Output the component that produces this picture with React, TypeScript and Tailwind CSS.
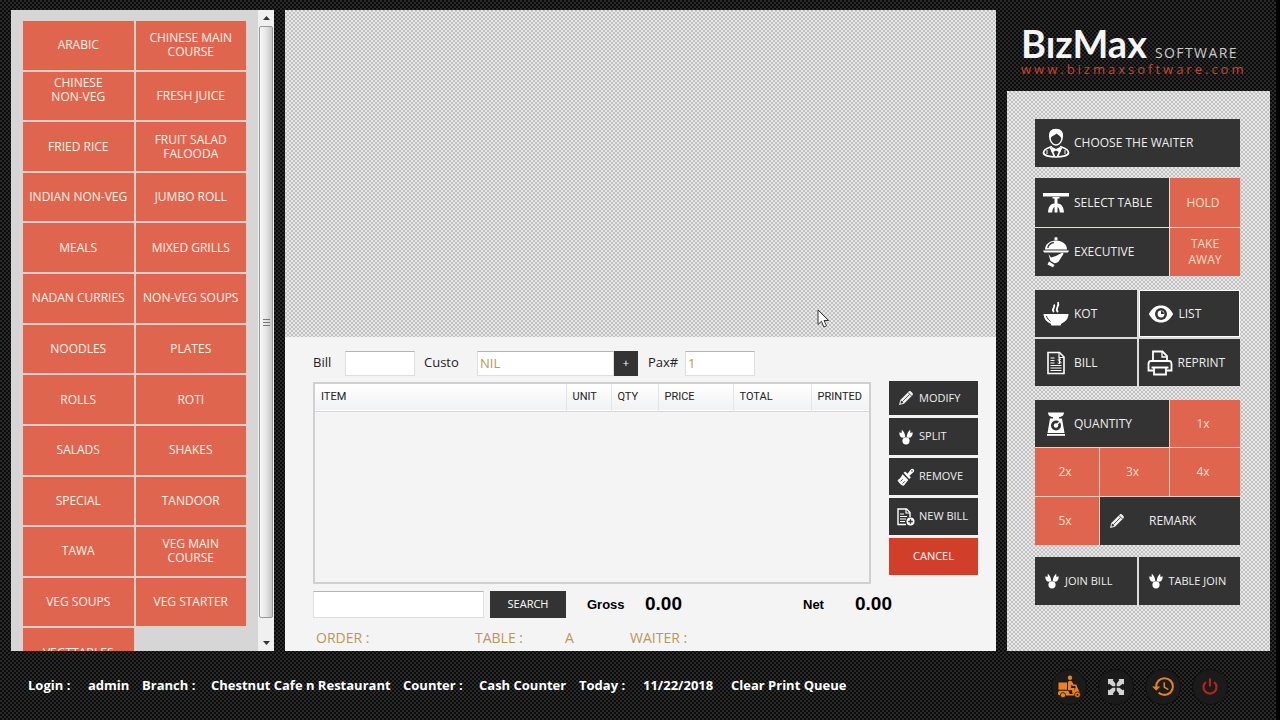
import type { ReactNode } from 'react';
import { MdHistory } from 'react-icons/md';

const darkWeave =
  'bg-[#181818] bg-[repeating-conic-gradient(#0b0b0b_0_25%,#292929_0_50%)] bg-[length:4px_4px]';
const lightWeave =
  'bg-[#d5d5d5] bg-[repeating-conic-gradient(#c2c2c2_0_25%,#e8e8e8_0_50%)] bg-[length:4px_4px]';

const categories: { label: string; raised?: boolean }[] = [
  { label: 'ARABIC' },
  { label: 'CHINESE MAIN COURSE' },
  { label: 'CHINESE NON-VEG', raised: true },
  { label: 'FRESH JUICE' },
  { label: 'FRIED RICE' },
  { label: 'FRUIT SALAD FALOODA' },
  { label: 'INDIAN NON-VEG' },
  { label: 'JUMBO ROLL' },
  { label: 'MEALS' },
  { label: 'MIXED GRILLS' },
  { label: 'NADAN CURRIES' },
  { label: 'NON-VEG SOUPS' },
  { label: 'NOODLES' },
  { label: 'PLATES' },
  { label: 'ROLLS' },
  { label: 'ROTI' },
  { label: 'SALADS' },
  { label: 'SHAKES' },
  { label: 'SPECIAL' },
  { label: 'TANDOOR' },
  { label: 'TAWA' },
  { label: 'VEG MAIN COURSE' },
  { label: 'VEG SOUPS' },
  { label: 'VEG STARTER' },
  { label: 'VEGTTABLES' },
];

function WaiterIcon() {
  return (
    <svg width="28" height="30" viewBox="0 0 28 30" fill="none" aria-hidden="true">
      <path d="M14 1.500c4.300 0 6.500 2.800 6.300 6.500C20 13 17.600 17 14 17S8 13 7.700 8C7.500 4.300 9.700 1.500 14 1.500Z" stroke="#fff" strokeWidth="1.600" />
      <path d="M7.500 9C7 4 9.500 1 14 1s7 3 6.500 8l-1.200 1.500C18.500 7.500 16 7 14.500 5.500 12.500 7.500 9.500 7.500 8.700 10.500Z" fill="#fff" />
      <path d="M10 18.500c-4 1.500-8 2-8.500 6-.3 3 6 4.500 12.500 4.500s12.800-1.500 12.500-4.500C26 20.500 22 20 18 18.500" stroke="#fff" strokeWidth="1.700" />
      <path d="m8.500 19.500 4 9M19.500 19.500l-4 9" stroke="#fff" strokeWidth="1.800" />
      <path d="m10 19.500 4 2 4-2v4.500l-4-2-4 2ZM5 22v4M23 22v4" fill="#fff" stroke="#fff" />
    </svg>
  );
}

function TableIcon() {
  return (
    <svg width="28" height="24" viewBox="0 0 28 24" fill="none" aria-hidden="true">
      <path d="M1 2h26v3.500H1Z" fill="#fff" />
      <path d="M10.500 6h7v1.500h-2V13h-3V7.500h-2Z" fill="#fff" />
      <path d="M12.500 12.500C8 13 6.500 16 6 21.500h4.200c.3-3 .8-4.500 2.300-5.500v5.500h3V16c1.500 1 2 2.500 2.300 5.500H22c-.5-5.500-2-8.500-6.500-9Z" fill="#fff" />
    </svg>
  );
}

function ClocheIcon() {
  return (
    <svg width="28" height="32" viewBox="0 0 28 32" fill="#fff" aria-hidden="true">
      <circle cx="14" cy="2.800" r="1.700" />
      <path d="M3 13.500C3 8 8 4.500 14 4.500S25 8 25 13.500Z" />
      <path d="M5.800 12c.5-3.300 3-5 6-5.500" fill="none" stroke="#333" strokeWidth="1.300" />
      <path d="M1 14.500h26l-1 2H2Z" />
      <path d="M6.500 18 9 21.500l5-1.500 5.500-3c1.500-.7 2.300.3 1.600 1.500L17 25c-1 1.500-2.500 2-4.500 2.300L8.500 25Z" />
      <path d="M7 25.500 12.500 29l-1.500 2.300-5.500-2.800Z" />
    </svg>
  );
}

function BowlIcon() {
  return (
    <svg width="28" height="28" viewBox="0 0 28 28" fill="#fff" aria-hidden="true">
      <path d="M1.500 14h25c-.3 5-3 7.500-7 9.500l-1 2h-9l-1-2c-4-2-6.700-4.500-7-9.500Z" />
      <path d="M4.500 16c.8 2.500 2 4 4 5.500" fill="none" stroke="#333" />
      <path d="M12 12c-3.500-3 2-4 0-7.500M16 12c-4-3.500 2-5 0-10" fill="none" stroke="#fff" strokeWidth="1.800" />
    </svg>
  );
}

function EyeIcon() {
  return (
    <svg width="26" height="22" viewBox="0 0 26 22" aria-hidden="true">
      <path d="M.8 11C4 5 8 2.500 13 2.500S22 5 25.200 11C22 17 18 19.500 13 19.500S4 17 .8 11Z" fill="#fff" />
      <circle cx="13" cy="11" r="6" fill="#333" />
      <circle cx="13" cy="11" r="3.400" fill="#fff" />
      <path d="M13 11V8a3 3 0 0 1 3 3Z" fill="#333" />
    </svg>
  );
}

function BillIcon() {
  return (
    <svg width="20" height="24" viewBox="0 0 20 24" fill="none" stroke="#fff" aria-hidden="true">
      <path d="M2 1.500h11.500L18 6v16.500H2Z" strokeWidth="1.600" />
      <path d="M13 1.500v5h5" strokeWidth="1.200" />
      <path d="M4.500 7h4M4.500 9.500h4M4.500 12h4M4.500 14.500h11M4.500 17h11M4.500 19.500h11" strokeWidth="1.200" />
      <path d="M15 8.500c-1.500-1-3.500-.5-3 .8.500 1 3 .7 3 2 0 1.200-2 1.500-3.300.7M13.500 7.500V13" strokeWidth="1" />
    </svg>
  );
}

function PrinterIcon() {
  return (
    <svg width="26" height="26" viewBox="0 0 26 26" fill="none" stroke="#fff" strokeWidth="1.800" aria-hidden="true">
      <path d="M6 11V1.500h9.500L20 6v5" />
      <path d="M15 2v5h5" strokeWidth="1.300" />
      <path d="M6 20.500H1.500V14c0-1.700.8-3 2.500-3h18c1.700 0 2.500 1.300 2.500 3v6.500H20" />
      <path d="M7 17.500h12v7H7ZM4.500 17.500h17" />
    </svg>
  );
}

function ScaleIcon() {
  return (
    <svg width="20" height="24" viewBox="0 0 20 24" aria-hidden="true">
      <path d="M2 .5h16c0 3-2.500 4.500-5 4.500v1.500h3l2.500 14.500H1.500L4 6.500h3V5C4.500 5 2 3.500 2 .5Z" fill="#fff" />
      <path d="M1 22h18v1.800H1Z" fill="#fff" />
      <circle cx="10" cy="13.500" r="5" fill="#333" />
      <circle cx="10" cy="13.500" r="2.200" fill="#fff" />
      <path d="m9.500 14 4-4" stroke="#fff" strokeWidth="1.300" />
    </svg>
  );
}

function PencilIcon() {
  return (
    <svg width="16" height="16" viewBox="0 0 16 16" aria-hidden="true">
      <path d="m1 15 1.300-5L11 1.300c1.200-1.200 4.900 2.400 3.700 3.700L6 13.700Z" fill="#eee" />
      <path d="m4.500 11.500 7-7M10 2.500 13.500 6" fill="none" stroke="#333" strokeWidth=".8" />
      <path d="M3 10.800c1 .1 2 1.100 2.200 2.200l-2.700.6Z" fill="#333" />
    </svg>
  );
}

function JoinIcon() {
  return (
    <svg width="14" height="16" viewBox="0 0 14 16" fill="#fff" aria-hidden="true">
      <path d="M2.800.8C4.500 2 6 4.800 6.300 7.600L5 8.800 2.500 8.500C.8 7.500 0 5 .5 3.200L2.600 4Z" />
      <path d="M11.200.8C9.500 2 8 4.800 7.700 7.600L9 8.800l2.500-.3C13.200 7.500 14 5 13.500 3.200L11.400 4Z" />
      <circle cx="7" cy="11.800" r="3.600" />
    </svg>
  );
}

function BrushIcon() {
  return (
    <svg width="18" height="18" viewBox="0 0 16 16" fill="#fff" aria-hidden="true">
      <path d="m9.300 5 3-3.700c1.500-1.600 4 .7 2.500 2.300L11 6.800l1.300 1.700-1.500 1.300-5-5.500L7.300 3Z" />
      <path d="m5 5.500 5 5.200-4 5c-2-.2-4.500-2-5.500-5 1.800-1 3-2.500 4.500-5.200Z" />
      <path d="m3 12 2-2M5 13.800l2-2" stroke="#333" strokeWidth=".8" />
      <circle cx="13.300" cy="2.700" r=".7" fill="#333" />
    </svg>
  );
}

function NewBillIcon() {
  return (
    <svg width="18" height="18" viewBox="0 0 18 18" fill="none" stroke="#fff" aria-hidden="true">
      <path d="M9 16.500H1V1h8.500L13 4.500V9" strokeWidth="1.400" />
      <path d="M9 1v4h4M3 6h4M3 8.500h7M3 11h6M3 13.500h5" strokeWidth="1.100" />
      <circle cx="13.500" cy="13.500" r="4" fill="#fff" stroke="none" />
      <path d="M13.500 11.200v4.600M11.200 13.500h4.600" stroke="#333" strokeWidth="1.400" />
    </svg>
  );
}

function ScooterIcon() {
  return (
    <svg width="24" height="24" viewBox="0 0 24 24" fill="#f0821e" aria-hidden="true">
      <circle cx="13" cy="2.800" r="2.200" />
      <path d="M1.500 7.500H10v7.200H1.500Z" />
      <path d="M11 7c1-1.700 3.500-1.700 4.300 0l1.200 2.500h2.800V11h-3.800l-1-1.500-.6 3.500h3.600v5.500h-2.300v-3.300H11Z" />
      <path d="M1 18c0-1.700 1-2.300 3-2.300h7.500L12.700 19H16l2.700-7-1-1.500 1.500-.8 3.300 7.300-4.500 3.500H3L1 19.500Z" />
      <circle cx="6" cy="20.200" r="2.600" stroke="#191919" strokeWidth=".8" />
      <circle cx="20.500" cy="19.700" r="2.900" stroke="#191919" strokeWidth=".8" />
      <circle cx="20.500" cy="19.700" r="1" fill="#191919" />
    </svg>
  );
}

function ExpandIcon() {
  return (
    <svg width="16" height="16" viewBox="0 0 16 16" fill="#d4d4d4" aria-hidden="true">
      <path d="M0 0h5.500l-.7 1.300L7.300 4.500v2.800H4.500L1.300 4.800 0 5.500Z" />
      <path d="M16 0h-5.500l.7 1.300L8.700 4.500v2.800h2.800l3.200-2.500 1.300.7Z" />
      <path d="M0 16h5.500l-.7-1.300 2.500-3.200V8.700H4.500l-3.200 2.500-1.300-.7Z" />
      <path d="M16 16h-5.500l.7-1.300-2.500-3.200V8.700h2.800l3.200 2.500 1.300-.7Z" />
    </svg>
  );
}

function PowerIcon() {
  return (
    <svg width="18" height="20" viewBox="0 0 18 20" fill="none" stroke="#b3241c" strokeWidth="2.200" aria-hidden="true">
      <path d="M5 5a6.500 6.500 0 1 0 8 0M9 1.500v8" />
    </svg>
  );
}

function DarkButton({ icon, children, className = '' }: { icon: ReactNode; children: ReactNode; className?: string }) {
  return (
    <button type="button" className={`flex items-center bg-[#333] pl-[7px] text-[12px] leading-4 text-[#eee] ${className}`}>
      <span className="flex w-7 shrink-0 justify-center">{icon}</span>
      <span className="ml-1 whitespace-nowrap">{children}</span>
    </button>
  );
}

function RedButton({ children, className = '' }: { children: ReactNode; className?: string }) {
  return (
    <button type="button" className={`bg-[#e0654f] pr-1 text-[12px] leading-4 text-[#f8dfc6] ${className}`}>
      {children}
    </button>
  );
}

function SideButton({ icon, children, className = 'h-[37px]' }: { icon: ReactNode; children: ReactNode; className?: string }) {
  return (
    <button type="button" className={`flex items-center bg-[#333] pl-2 text-[11px] text-[#eee] ${className}`}>
      <span className="flex w-[18px] shrink-0 justify-center">{icon}</span>
      <span className="ml-1 whitespace-nowrap">{children}</span>
    </button>
  );
}

function CategoryPanel() {
  return (
    <aside className="flex w-[263px] shrink-0 overflow-hidden bg-[#d6d6d6]">
      <div className="min-h-0 flex-1 overflow-hidden pt-[11px] pr-3 pl-3">
        <div className="grid h-[656px] auto-rows-fr grid-cols-2 gap-[2px]">
          {categories.map((c) => (
            <button
              key={c.label}
              type="button"
              className={`flex items-center justify-center bg-[#e0654f] text-center text-[12px] leading-[14px] text-[#fff3e8] outline-1 outline-[#e2d0c8] ${c.raised ? 'px-6 pb-3' : 'px-1'}`}
            >
              {c.label}
            </button>
          ))}
        </div>
      </div>
      <div className="flex w-4 shrink-0 flex-col items-center bg-[#f0f0f0]">
        <button type="button" aria-label="Scroll up" className="flex h-4 w-full shrink-0 items-center justify-center">
          <svg width="7" height="4" viewBox="0 0 7 4" fill="#333" aria-hidden="true"><path d="M0 4 3.500 0 7 4Z" /></svg>
        </button>
        <div className="flex w-[14px] flex-1 flex-col items-center justify-center gap-[2px] rounded-xs border border-[#979797] bg-linear-to-r from-[#f7f7f7] via-[#e6e6e6] to-[#c4c4c4]">
          <span className="h-px w-[7px] bg-[#777]" />
          <span className="h-px w-[7px] bg-[#777]" />
          <span className="h-px w-[7px] bg-[#777]" />
        </div>
        <button type="button" aria-label="Scroll down" className="flex h-[33px] w-full shrink-0 items-end justify-center pb-[6px]">
          <svg width="7" height="4" viewBox="0 0 7 4" fill="#333" aria-hidden="true"><path d="M0 0h7L3.500 4Z" /></svg>
        </button>
      </div>
    </aside>
  );
}

const field = 'border border-[#dedede] border-t-[#b5b5b5] bg-white';
const headCell = 'border-r border-[#e3e4e6] pl-[6px] font-normal last:border-r-0';

function OrderPanel() {
  return (
    <section className="flex min-w-0 flex-1 flex-col">
      <div className={`min-h-0 flex-1 ${lightWeave}`} />
      <div className="flex h-[314px] shrink-0 flex-col bg-[#f4f4f4] pr-[18px] pl-7">
        <div className="flex h-[44px] shrink-0 items-center pt-2 text-[13px] text-[#222]">
          <label htmlFor="bill" className="w-8">Bill</label>
          <input id="bill" className={`h-[25px] w-[70px] ${field}`} />
          <label htmlFor="customer" className="ml-[9px] w-[53px]">Custo</label>
          <input id="customer" defaultValue="NIL" className={`h-[25px] w-[137px] px-[2px] text-[#b8975a] ${field}`} />
          <button type="button" aria-label="Add customer" className="h-[25px] w-6 bg-[#333] text-[11px] text-white">+</button>
          <label htmlFor="pax" className="ml-[10px] w-[37px]">Pax#</label>
          <input id="pax" defaultValue="1" className={`h-[25px] w-[70px] px-[2px] text-[#b8975a] ${field}`} />
        </div>
        <div className="flex shrink-0">
          <div className="mt-px mr-[18px] h-[202px] min-w-0 flex-1 border-2 border-[#d0d0d0] bg-[#f4f4f4]">
            <table className="w-full table-fixed border-collapse text-left font-[Roboto,sans-serif] text-[11px] text-[#222]">
              <colgroup>
                <col />
                <col className="w-[45px]" />
                <col className="w-[47px]" />
                <col className="w-[75px]" />
                <col className="w-[78px]" />
                <col className="w-[58px]" />
              </colgroup>
              <thead>
                <tr className="h-[27px] border-b border-[#d5d5d5] bg-linear-to-b from-white to-[#f1f2f4]">
                  <th className={headCell}>ITEM</th>
                  <th className={headCell}>UNIT</th>
                  <th className={headCell}>QTY</th>
                  <th className={headCell}>PRICE</th>
                  <th className={headCell}>TOTAL</th>
                  <th className={headCell}>PRINTED</th>
                </tr>
              </thead>
              <tbody />
            </table>
          </div>
          <div className="flex w-[89px] shrink-0 flex-col gap-[3px]">
            <SideButton icon={<PencilIcon />} className="h-[34px]">MODIFY</SideButton>
            <SideButton icon={<JoinIcon />}>SPLIT</SideButton>
            <SideButton icon={<BrushIcon />}>REMOVE</SideButton>
            <SideButton icon={<NewBillIcon />}>NEW BILL</SideButton>
            <button type="button" className="h-[37px] bg-[#d13f2a] text-[11px] text-white">CANCEL</button>
          </div>
        </div>
        <div className="mt-[7px] flex h-[27px] shrink-0 items-center">
          <input aria-label="Search items" className={`h-[27px] w-[171px] ${field}`} />
          <button type="button" className="ml-[6px] h-[27px] w-[76px] bg-[#333] text-[11px] text-white">SEARCH</button>
          <div className="ml-[21px] flex w-[216px] items-center font-['Liberation_Sans',sans-serif] font-bold text-black">
            <span className="w-[58px] text-[13px]">Gross</span>
            <span className="text-[19px]">0.00</span>
          </div>
          <div className="flex items-center font-['Liberation_Sans',sans-serif] font-bold text-black">
            <span className="w-[52px] text-[13px]">Net</span>
            <span className="text-[19px]">0.00</span>
          </div>
        </div>
        <div className="mt-[10px] flex pl-[3px] text-[14px] leading-5 text-[#b8975a]">
          <span className="w-[159px]">ORDER :</span>
          <span className="w-[90px]">TABLE :</span>
          <span className="w-[65px]">A</span>
          <span>WAITER :</span>
        </div>
      </div>
    </section>
  );
}

function ControlPanel() {
  return (
    <aside className="flex w-[263px] shrink-0 flex-col">
      <header className="flex h-[81px] shrink-0 flex-col pt-4 pl-[14px] whitespace-nowrap">
        <div className="flex h-9 items-baseline leading-[34px] text-[#f4f4f4]">
          <span className="w-[134px] font-[Lato,sans-serif] text-[38px] font-bold">BızMax</span>
          <span className="text-[14px] tracking-widest text-[#ccc]">SOFTWARE</span>
        </div>
        <a href="#site" className="text-[13px] leading-[14px] tracking-[3px] text-[#d2402c]">www.bizmaxsoftware.com</a>
      </header>
      <div className={`flex min-h-0 flex-1 flex-col pt-7 pr-[30px] pl-7 ${lightWeave}`}>
        <DarkButton icon={<WaiterIcon />} className="h-12 shrink-0">CHOOSE THE WAITER</DarkButton>
        <div className="mt-[11px] grid shrink-0 grid-cols-[1fr_70px] gap-px bg-[#e4e0dc]">
          <DarkButton icon={<TableIcon />} className="h-[49px]">SELECT TABLE</DarkButton>
          <RedButton>HOLD</RedButton>
          <DarkButton icon={<ClocheIcon />} className="h-12">EXECUTIVE</DarkButton>
          <RedButton className="pl-1">TAKE<br />AWAY</RedButton>
        </div>
        <div className="mt-[14px] grid shrink-0 grid-cols-2 gap-[2px] bg-[#dcdcdc]">
          <DarkButton icon={<BowlIcon />} className="h-[47px]">KOT</DarkButton>
          <DarkButton icon={<EyeIcon />} className="border border-white">LIST</DarkButton>
          <DarkButton icon={<BillIcon />} className="h-[47px]">BILL</DarkButton>
          <DarkButton icon={<PrinterIcon />}>REPRINT</DarkButton>
        </div>
        <div className="mt-[14px] grid shrink-0 grid-cols-[64px_1fr_70px] gap-px bg-[#f0cfc0]">
          <DarkButton icon={<ScaleIcon />} className="col-span-2 h-[47px]">QUANTITY</DarkButton>
          <RedButton>1x</RedButton>
          <RedButton className="h-12">2x</RedButton>
          <RedButton>3x</RedButton>
          <RedButton>4x</RedButton>
          <RedButton className="h-12">5x</RedButton>
          <button type="button" className="col-span-2 flex items-center bg-[#333] pl-[9px] text-[12px] text-[#eee]">
            <PencilIcon />
            <span className="ml-6">REMARK</span>
          </button>
        </div>
        <div className="mt-3 grid shrink-0 grid-cols-2 gap-[2px] bg-[#dcdcdc]">
          <SideButton icon={<JoinIcon />} className="h-12">JOIN BILL</SideButton>
          <SideButton icon={<JoinIcon />} className="h-12">TABLE JOIN</SideButton>
        </div>
      </div>
    </aside>
  );
}

function StatusBar() {
  const round = 'flex size-9 items-center justify-center rounded-full border border-[#101010] bg-[#1b1b1b]';
  return (
    <footer className="flex h-[69px] shrink-0 items-center justify-between pr-12 pl-7 text-[13px] font-bold whitespace-nowrap text-white">
      <div className="flex">
        <span className="w-[60px]">Login :</span>
        <span className="w-[54px]">admin</span>
        <span className="w-[69px]">Branch :</span>
        <span className="w-48">Chestnut Cafe n Restaurant</span>
        <span className="w-[76px]">Counter :</span>
        <span className="w-[100px]">Cash Counter</span>
        <span className="w-16">Today :</span>
        <span className="w-[88px]">11/22/2018</span>
        <button type="button">Clear Print Queue</button>
      </div>
      <div className="flex gap-[11px] pt-[2px]">
        <button type="button" aria-label="Delivery" className={round}><ScooterIcon /></button>
        <button type="button" aria-label="Full screen" className={round}><ExpandIcon /></button>
        <button type="button" aria-label="History" className={round}><MdHistory size={25} color="#e8821e" /></button>
        <button type="button" aria-label="Power" className={round}><PowerIcon /></button>
      </div>
    </footer>
  );
}

export default function App() {
  return (
    <div className={`relative flex h-screen flex-col overflow-hidden border-r-4 border-black font-['Open_Sans',sans-serif] ${darkWeave}`}>
      <main className="flex min-h-0 flex-1 gap-[11px] pt-[10px] pr-[6px] pl-[11px]">
        <CategoryPanel />
        <OrderPanel />
        <ControlPanel />
      </main>
      <StatusBar />
      <svg className="pointer-events-none absolute top-[309px] left-[817px]" width="13" height="20" viewBox="0 0 13 20" aria-hidden="true">
        <path d="M1 1v14.500l3.400-3.200 2.500 5.700 2.600-1.200L7 11.500h4.600Z" fill="#fff" stroke="#333" />
      </svg>
    </div>
  );
}
